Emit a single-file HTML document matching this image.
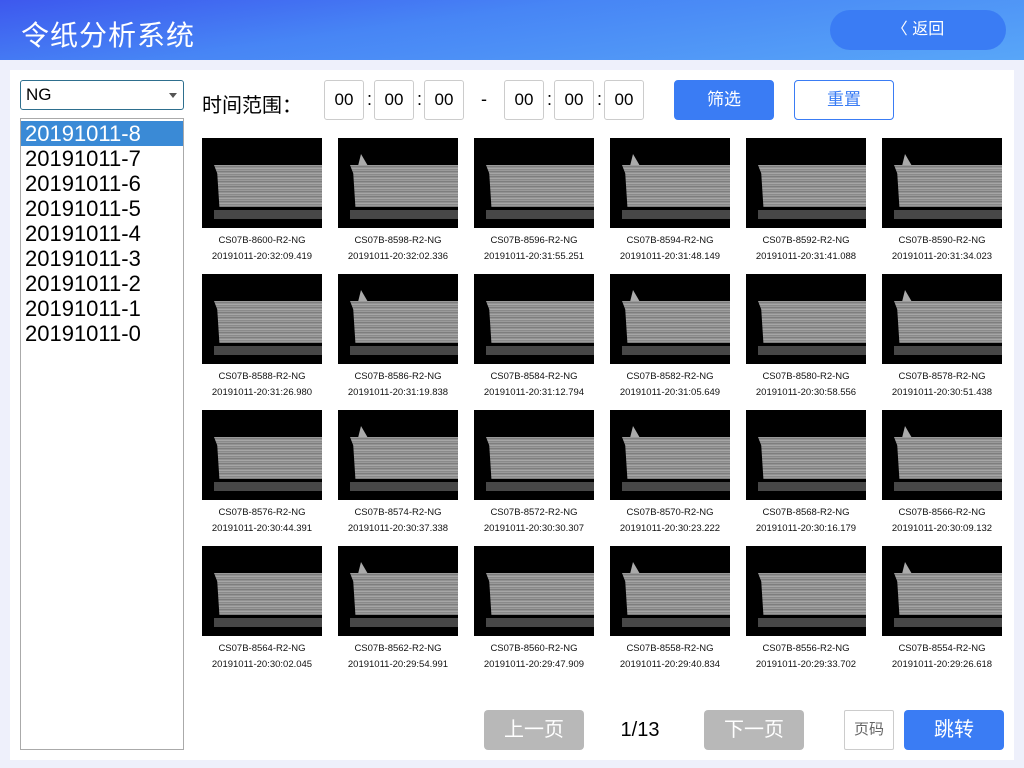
<!DOCTYPE html>
<html><head><meta charset="utf-8"><style>
*{margin:0;padding:0;box-sizing:border-box}
body{width:1024px;height:768px;overflow:hidden;background:#eef0fb;font-family:"Liberation Sans","Noto Sans CJK SC",sans-serif;position:relative}
.hdr{position:absolute;left:0;top:0;width:1024px;height:60px;background:linear-gradient(172deg,#3d58ee 0%,#4785f5 40%,#58a6f8 100%)}
.title{position:absolute;left:21px;top:14px;color:#fff;font-size:28px;letter-spacing:1px}
.back{position:absolute;left:830px;top:10px;width:176px;height:40px;border-radius:20px;background:#3a7cf4;color:#fff;font-size:16px;line-height:40px;text-align:center}
.panel{position:absolute;left:10px;top:70px;width:1004px;height:690px;background:#fff}
.sel{position:absolute;left:20px;top:80px;width:164px;height:30px;border:1px solid #2e6f8e;border-radius:3px;font-size:17px;line-height:28px;padding-left:5px}
.sel:after{content:"";position:absolute;right:6px;top:12px;border:4px solid transparent;border-top:5px solid #555}
.list{position:absolute;left:20px;top:118px;width:164px;height:632px;border:1px solid #aaa;padding-top:2px}
.list div{height:25px;font-size:22px;line-height:25px;padding-left:4px;color:#000}
.list .on{background:#3a8ad6;color:#fff}
.lbl{position:absolute;left:202px;top:89px;font-size:20px}
.tb{position:absolute;top:80px;width:40px;height:40px;border:1px solid #ccc;border-radius:3px;font-size:17px;line-height:38px;text-align:center}
.col{position:absolute;top:89px;font-size:18px}
.btn{position:absolute;top:80px;width:100px;height:40px;border-radius:4px;font-size:17px;line-height:38px;text-align:center}
.th{position:absolute;width:120px}
.im{width:120px;height:90px;background:#000;position:relative;overflow:hidden}
.band{position:absolute;left:12px;right:0;top:27px;height:42px;background:repeating-linear-gradient(180deg,#a8a8a8 0,#707070 2px,#b4b4b4 3px,#7c7c7c 5px);clip-path:polygon(0 0,100% 0,100% 100%,5% 100%,3% 20%)}
.b2{position:absolute;left:12px;right:0;top:72px;height:9px;background:#474747}
.spk{position:absolute;left:20px;top:16px;width:10px;height:12px;background:#aaa;clip-path:polygon(30% 0,100% 100%,0 100%)}
.cap{font-size:9.5px;text-align:center;line-height:16px;margin-top:5px;color:#111}
.pg{position:absolute;top:710px;height:40px;border-radius:4px;font-size:20px;line-height:40px;text-align:center}
</style></head><body>
<div class="hdr"><div class="title">令纸分析系统</div><div class="back">〈 返回</div></div>
<div class="panel"></div>
<div class="sel">NG</div>
<div class="list"><div class="on">20191011-8</div><div>20191011-7</div><div>20191011-6</div><div>20191011-5</div><div>20191011-4</div><div>20191011-3</div><div>20191011-2</div><div>20191011-1</div><div>20191011-0</div></div>
<div class="lbl">时间范围：</div>
<div class="tb" style="left:324px">00</div><div class="col" style="left:367px">:</div>
<div class="tb" style="left:374px">00</div><div class="col" style="left:417px">:</div>
<div class="tb" style="left:424px">00</div>
<div class="col" style="left:481px">-</div>
<div class="tb" style="left:504px">00</div><div class="col" style="left:547px">:</div>
<div class="tb" style="left:554px">00</div><div class="col" style="left:597px">:</div>
<div class="tb" style="left:604px">00</div>
<div class="btn" style="left:674px;background:#3a7cf4;color:#fff;border:1px solid #3a7cf4">筛选</div>
<div class="btn" style="left:794px;background:#fff;color:#3a7cf4;border:1px solid #3a7cf4">重置</div>

<div class="th" style="left:202px;top:138px"><div class="im"><div class="band"></div><div class="b2"></div></div><div class="cap">CS07B-8600-R2-NG<br>20191011-20:32:09.419</div></div>
<div class="th" style="left:338px;top:138px"><div class="im"><div class="spk"></div><div class="band"></div><div class="b2"></div></div><div class="cap">CS07B-8598-R2-NG<br>20191011-20:32:02.336</div></div>
<div class="th" style="left:474px;top:138px"><div class="im"><div class="band"></div><div class="b2"></div></div><div class="cap">CS07B-8596-R2-NG<br>20191011-20:31:55.251</div></div>
<div class="th" style="left:610px;top:138px"><div class="im"><div class="spk"></div><div class="band"></div><div class="b2"></div></div><div class="cap">CS07B-8594-R2-NG<br>20191011-20:31:48.149</div></div>
<div class="th" style="left:746px;top:138px"><div class="im"><div class="band"></div><div class="b2"></div></div><div class="cap">CS07B-8592-R2-NG<br>20191011-20:31:41.088</div></div>
<div class="th" style="left:882px;top:138px"><div class="im"><div class="spk"></div><div class="band"></div><div class="b2"></div></div><div class="cap">CS07B-8590-R2-NG<br>20191011-20:31:34.023</div></div>

<div class="th" style="left:202px;top:274px"><div class="im"><div class="band"></div><div class="b2"></div></div><div class="cap">CS07B-8588-R2-NG<br>20191011-20:31:26.980</div></div>
<div class="th" style="left:338px;top:274px"><div class="im"><div class="spk"></div><div class="band"></div><div class="b2"></div></div><div class="cap">CS07B-8586-R2-NG<br>20191011-20:31:19.838</div></div>
<div class="th" style="left:474px;top:274px"><div class="im"><div class="band"></div><div class="b2"></div></div><div class="cap">CS07B-8584-R2-NG<br>20191011-20:31:12.794</div></div>
<div class="th" style="left:610px;top:274px"><div class="im"><div class="spk"></div><div class="band"></div><div class="b2"></div></div><div class="cap">CS07B-8582-R2-NG<br>20191011-20:31:05.649</div></div>
<div class="th" style="left:746px;top:274px"><div class="im"><div class="band"></div><div class="b2"></div></div><div class="cap">CS07B-8580-R2-NG<br>20191011-20:30:58.556</div></div>
<div class="th" style="left:882px;top:274px"><div class="im"><div class="spk"></div><div class="band"></div><div class="b2"></div></div><div class="cap">CS07B-8578-R2-NG<br>20191011-20:30:51.438</div></div>

<div class="th" style="left:202px;top:410px"><div class="im"><div class="band"></div><div class="b2"></div></div><div class="cap">CS07B-8576-R2-NG<br>20191011-20:30:44.391</div></div>
<div class="th" style="left:338px;top:410px"><div class="im"><div class="spk"></div><div class="band"></div><div class="b2"></div></div><div class="cap">CS07B-8574-R2-NG<br>20191011-20:30:37.338</div></div>
<div class="th" style="left:474px;top:410px"><div class="im"><div class="band"></div><div class="b2"></div></div><div class="cap">CS07B-8572-R2-NG<br>20191011-20:30:30.307</div></div>
<div class="th" style="left:610px;top:410px"><div class="im"><div class="spk"></div><div class="band"></div><div class="b2"></div></div><div class="cap">CS07B-8570-R2-NG<br>20191011-20:30:23.222</div></div>
<div class="th" style="left:746px;top:410px"><div class="im"><div class="band"></div><div class="b2"></div></div><div class="cap">CS07B-8568-R2-NG<br>20191011-20:30:16.179</div></div>
<div class="th" style="left:882px;top:410px"><div class="im"><div class="spk"></div><div class="band"></div><div class="b2"></div></div><div class="cap">CS07B-8566-R2-NG<br>20191011-20:30:09.132</div></div>

<div class="th" style="left:202px;top:546px"><div class="im"><div class="band"></div><div class="b2"></div></div><div class="cap">CS07B-8564-R2-NG<br>20191011-20:30:02.045</div></div>
<div class="th" style="left:338px;top:546px"><div class="im"><div class="spk"></div><div class="band"></div><div class="b2"></div></div><div class="cap">CS07B-8562-R2-NG<br>20191011-20:29:54.991</div></div>
<div class="th" style="left:474px;top:546px"><div class="im"><div class="band"></div><div class="b2"></div></div><div class="cap">CS07B-8560-R2-NG<br>20191011-20:29:47.909</div></div>
<div class="th" style="left:610px;top:546px"><div class="im"><div class="spk"></div><div class="band"></div><div class="b2"></div></div><div class="cap">CS07B-8558-R2-NG<br>20191011-20:29:40.834</div></div>
<div class="th" style="left:746px;top:546px"><div class="im"><div class="band"></div><div class="b2"></div></div><div class="cap">CS07B-8556-R2-NG<br>20191011-20:29:33.702</div></div>
<div class="th" style="left:882px;top:546px"><div class="im"><div class="spk"></div><div class="band"></div><div class="b2"></div></div><div class="cap">CS07B-8554-R2-NG<br>20191011-20:29:26.618</div></div>

<div class="pg" style="left:484px;width:100px;background:#b8b8b8;color:#fff">上一页</div>
<div class="pg" style="left:610px;width:60px;color:#000">1/13</div>
<div class="pg" style="left:704px;width:100px;background:#b8b8b8;color:#fff">下一页</div>
<div class="pg" style="left:844px;width:50px;border:1px solid #ccc;border-radius:2px;font-size:15px;color:#666;line-height:38px">页码</div>
<div class="pg" style="left:904px;width:100px;background:#3a7cf4;color:#fff">跳转</div>
</body></html>
